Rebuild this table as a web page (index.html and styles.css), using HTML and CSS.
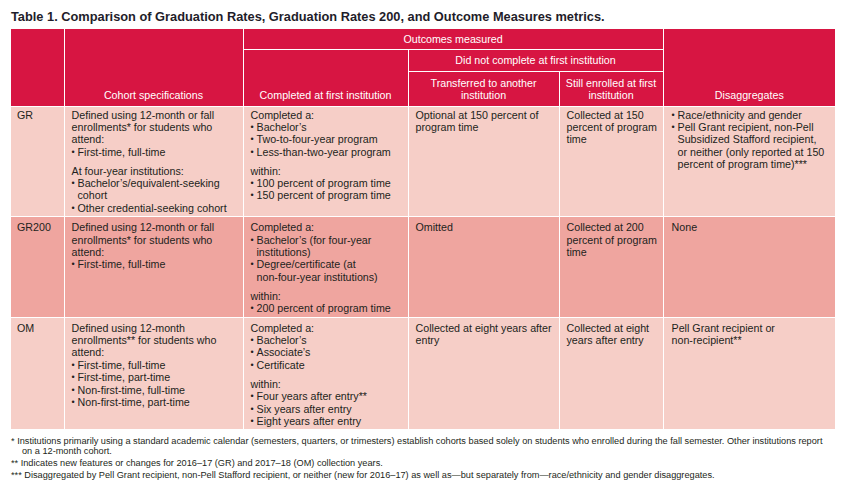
FILE: index.html
```html
<!DOCTYPE html>
<html lang="en">
<head>
<meta charset="utf-8">
<title>Table 1</title>
<link rel="stylesheet" href="styles.css">
</head>
<body>
<h1 class="title">Table 1. Comparison of Graduation Rates, Graduation Rates 200, and Outcome Measures metrics.</h1>
<table class="grid">
  <colgroup>
    <col class="c1"><col class="c2"><col class="c3"><col class="c4"><col class="c5"><col class="c6">
  </colgroup>
  <thead>
    <tr class="ha">
      <th rowspan="3"></th>
      <th rowspan="3" class="bottom">Cohort specifications</th>
      <th colspan="3">Outcomes measured</th>
      <th rowspan="3" class="bottom">Disaggregates</th>
    </tr>
    <tr class="hb">
      <th rowspan="2" class="bottom">Completed at first institution</th>
      <th colspan="2">Did not complete at first institution</th>
    </tr>
    <tr class="hc">
      <th class="bottom">Transferred to another<br>institution</th>
      <th class="bottom">Still enrolled at first<br>institution</th>
    </tr>
  </thead>
  <tbody>
    <tr class="light first">
      <td>GR</td>
      <td>
        <p>Defined using 12-month or fall<br>enrollments* for students who<br>attend:</p>
        <ul><li>First-time, full-time</li></ul>
        <p class="gap">At four-year institutions:</p>
        <ul><li>Bachelor’s/equivalent-seeking<br>cohort</li><li>Other credential-seeking cohort</li></ul>
      </td>
      <td>
        <p>Completed a:</p>
        <ul><li>Bachelor’s</li><li>Two-to-four-year program</li><li>Less-than-two-year program</li></ul>
        <p class="gap">within:</p>
        <ul><li>100 percent of program time</li><li>150 percent of program time</li></ul>
      </td>
      <td><p>Optional at 150 percent of<br>program time</p></td>
      <td><p>Collected at 150<br>percent of program<br>time</p></td>
      <td>
        <ul><li>Race/ethnicity and gender</li><li>Pell Grant recipient, non-Pell<br>Subsidized Stafford recipient,<br>or neither (only reported at 150<br>percent of program time)***</li></ul>
      </td>
    </tr>
    <tr class="dark">
      <td>GR200</td>
      <td>
        <p>Defined using 12-month or fall<br>enrollments* for students who<br>attend:</p>
        <ul><li>First-time, full-time</li></ul>
      </td>
      <td>
        <p>Completed a:</p>
        <ul><li>Bachelor’s (for four-year<br>institutions)</li><li>Degree/certificate (at<br>non-four-year institutions)</li></ul>
        <p class="gap">within:</p>
        <ul><li>200 percent of program time</li></ul>
      </td>
      <td><p>Omitted</p></td>
      <td><p>Collected at 200<br>percent of program<br>time</p></td>
      <td><p>None</p></td>
    </tr>
    <tr class="light">
      <td>OM</td>
      <td>
        <p>Defined using 12-month<br>enrollments** for students who<br>attend:</p>
        <ul><li>First-time, full-time</li><li>First-time, part-time</li><li>Non-first-time, full-time</li><li>Non-first-time, part-time</li></ul>
      </td>
      <td>
        <p>Completed a:</p>
        <ul><li>Bachelor’s</li><li>Associate’s</li><li>Certificate</li></ul>
        <p class="gap">within:</p>
        <ul><li>Four years after entry**</li><li>Six years after entry</li><li>Eight years after entry</li></ul>
      </td>
      <td><p>Collected at eight years after<br>entry</p></td>
      <td><p>Collected at eight<br>years after entry</p></td>
      <td><p>Pell Grant recipient or<br>non-recipient**</p></td>
    </tr>
  </tbody>
</table>
<div class="notes">
  <p class="note">* Institutions primarily using a standard academic calendar (semesters, quarters, or trimesters) establish cohorts based solely on students who enrolled during the fall semester. Other institutions report<br>on a 12-month cohort.</p>
  <p class="note">** Indicates new features or changes for 2016–17 (GR) and 2017–18 (OM) collection years.</p>
  <p class="note">*** Disaggregated by Pell Grant recipient, non-Pell Stafford recipient, or neither (new for 2016–17) as well as—but separately from—race/ethnicity and gender disaggregates.</p>
</div>
</body>
</html>
```

FILE: styles.css
```css
html, body {
  margin: 0;
  padding: 0;
  background: #ffffff;
}

body {
  width: 848px;
  height: 498px;
  padding: 10px 0 0 11px;
  box-sizing: border-box;
  font-family: "Liberation Sans", Arial, Helvetica, sans-serif;
  color: #231f20;
  overflow: hidden;
}

.title {
  margin: 0 0 5px 0;
  font-size: 12.8px;
  line-height: 14px;
  font-weight: bold;
  color: #1f1d2a;
  white-space: nowrap;
}

.grid {
  width: 824px;
  table-layout: fixed;
  border-collapse: collapse;
  border-style: hidden;
  font-size: 10.7px;
  line-height: 12.4px;
}

.c1 { width: 53px; }
.c2 { width: 179px; }
.c3 { width: 165px; }
.c4 { width: 151px; }
.c5 { width: 104px; }
.c6 { width: 172px; }

.grid th,
.grid td {
  border: 1px solid #ffffff;
  padding: 0;
}

.grid th {
  background: #d71542;
  color: #ffffff;
  font-weight: normal;
  text-align: center;
  vertical-align: middle;
  padding: 0 3px;
}

.grid th.bottom {
  vertical-align: bottom;
  padding-bottom: 4px;
}

.ha { height: 20px; }
.hb { height: 22px; }
.hc { height: 35px; }

.grid td {
  vertical-align: top;
  text-align: left;
  padding: 4px 3px 2px 7px;
}

.grid tr.first td {
  padding-top: 2px;
}

.grid td:first-child {
  padding-left: 6px;
}

.grid td:last-child {
  padding-left: 8px;
}

.light td { background: #f6cec7; }
.dark td { background: #efa59f; }

.grid p {
  margin: 0;
}

.grid p.gap {
  margin-top: 6.5px;
}

.grid ul {
  margin: 0;
  padding: 0;
  list-style: none;
}

.grid li {
  padding-left: 6px;
}

.grid li::before {
  content: "•";
  display: inline-block;
  width: 6px;
  margin-left: -6px;
  font-size: 9px;
  vertical-align: top;
}

.notes {
  margin-top: 7px;
  width: 830px;
  font-size: 9.2px;
  line-height: 10px;
}

.note {
  margin: 0 0 2px 0;
  padding-left: 11px;
  text-indent: -11px;
}
```
